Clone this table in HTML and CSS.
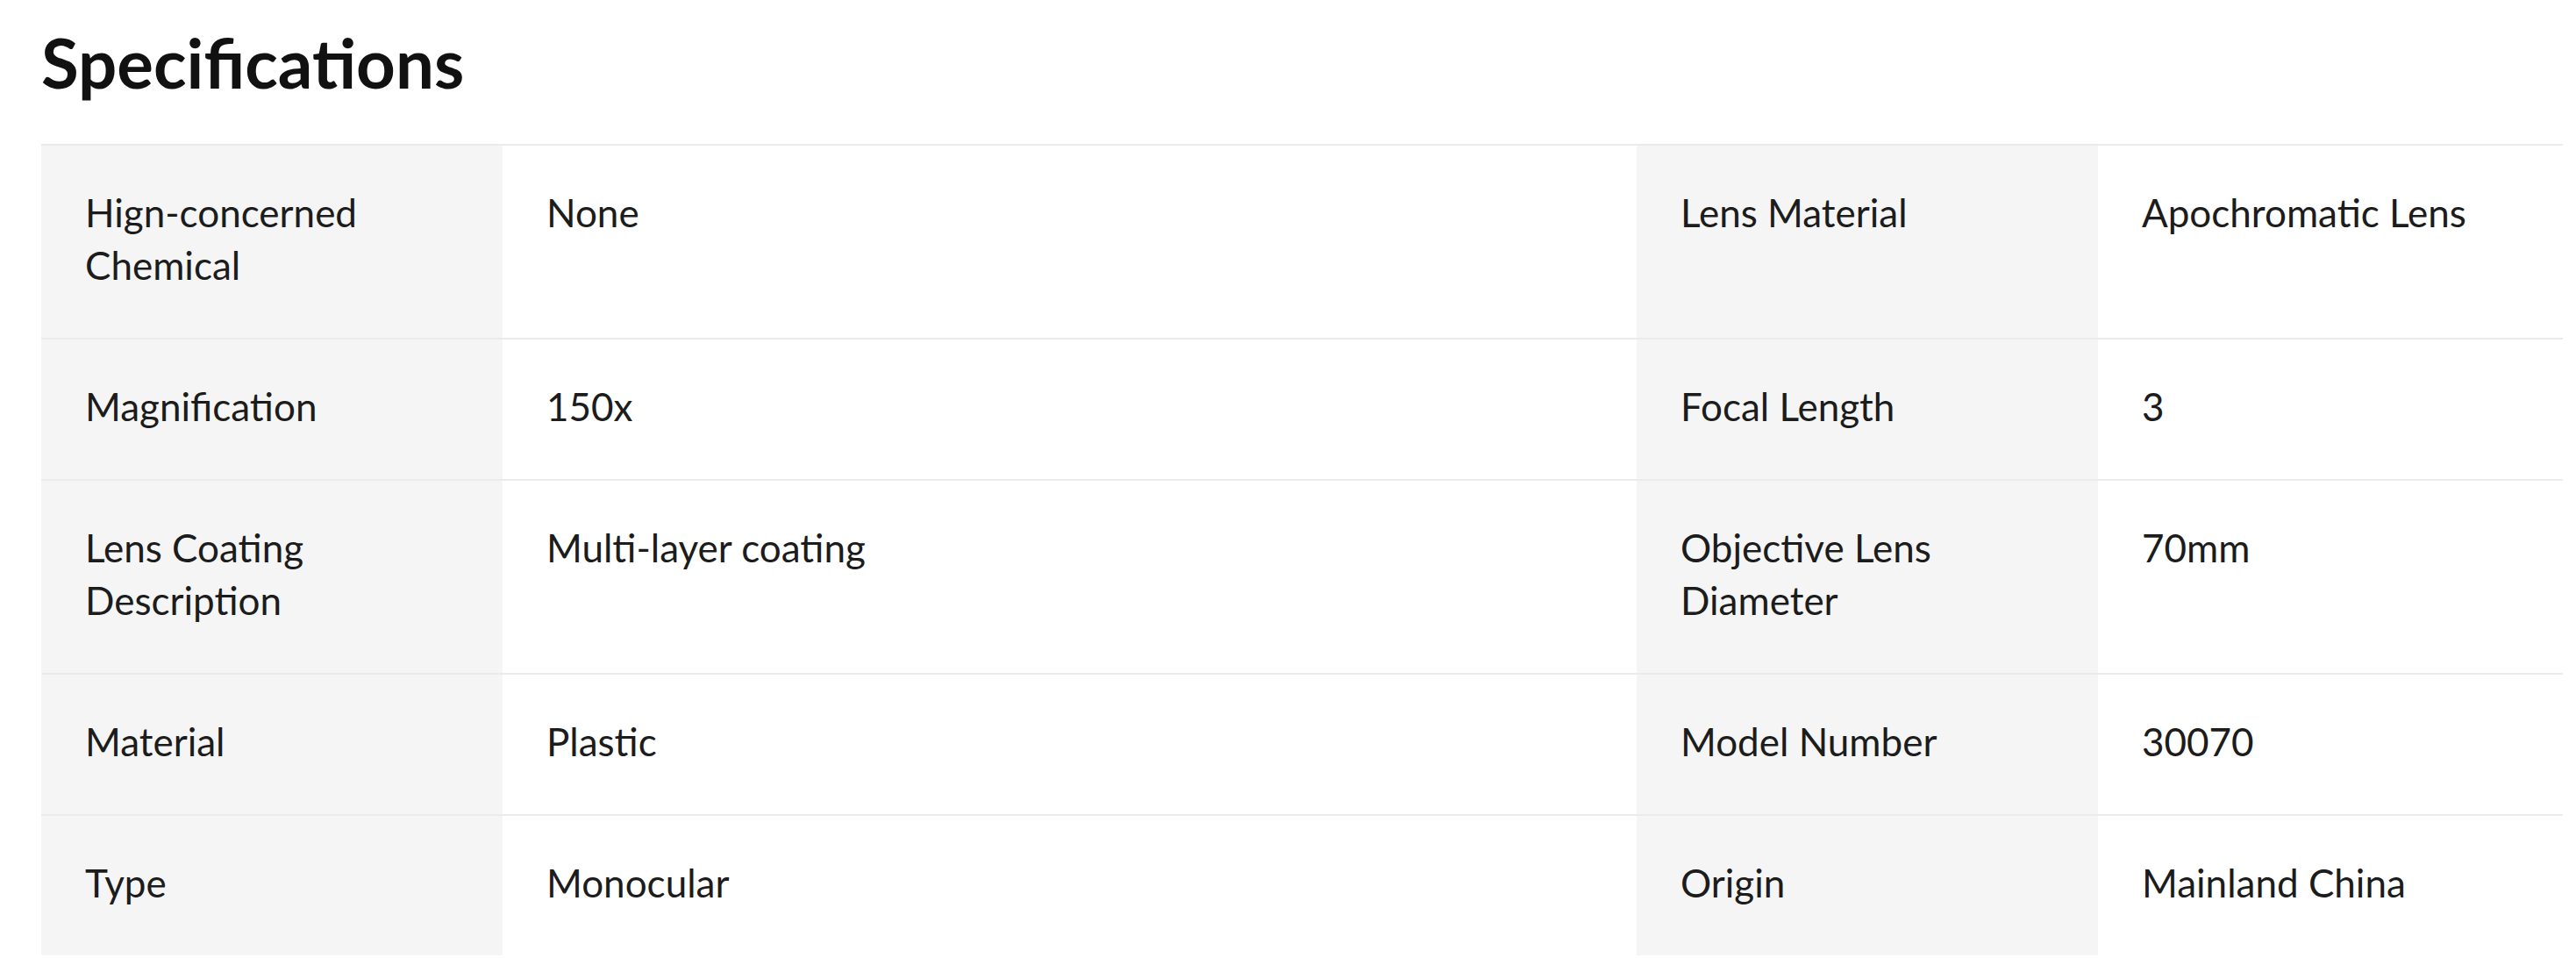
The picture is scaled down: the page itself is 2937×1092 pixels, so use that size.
FILE: index.html
```html
<!DOCTYPE html>
<html lang="en">
<head>
    <meta charset="UTF-8">
    <meta name="viewport" content="width=device-width, initial-scale=1.0">
    <title>Specifications</title>
    <link rel="stylesheet" href="styles.css">
</head>
<body>
    <div class="specs">
        <h2 class="specs-title">Specifications</h2>
        <div class="specs-table">
            <div class="row">
                <div class="label">Hign-concerned Chemical</div>
                <div class="value">None</div>
                <div class="label">Lens Material</div>
                <div class="value">Apochromatic Lens</div>
            </div>
            <div class="row">
                <div class="label">Magnification</div>
                <div class="value">150x</div>
                <div class="label">Focal Length</div>
                <div class="value">3</div>
            </div>
            <div class="row">
                <div class="label">Lens Coating Description</div>
                <div class="value">Multi-layer coating</div>
                <div class="label">Objective Lens Diameter</div>
                <div class="value">70mm</div>
            </div>
            <div class="row">
                <div class="label">Material</div>
                <div class="value">Plastic</div>
                <div class="label">Model Number</div>
                <div class="value">30070</div>
            </div>
            <div class="row">
                <div class="label">Type</div>
                <div class="value">Monocular</div>
                <div class="label">Origin</div>
                <div class="value">Mainland China</div>
            </div>
        </div>
    </div>
</body>
</html>
```

FILE: styles.css
```css
html, body { margin: 0; background-color: #fff; }

body {
    font-family: "Lato", "Liberation Sans", sans-serif;
    color: #1c1c1c;
}

.specs {
    padding: 0 15px 0 47px;
}

.specs-title {
    margin: 0;
    padding-top: 26px;
    height: 164px;
    box-sizing: border-box;
    font-size: 78px;
    line-height: 90px;
    font-weight: 700;
    color: #111;
}

.specs-table .row {
    display: grid;
    grid-template-columns: 526px 1293px 526px 1fr;
    border-top: 2px solid #ebebeb;
}

.specs-table .label,
.specs-table .value {
    padding: 46px 50px 53px 50px;
    font-size: 44px;
    line-height: 60px;
}

.specs-table .label {
    background: #f5f5f5;
}

.specs-table .value {
    background: #fff;
}
```
